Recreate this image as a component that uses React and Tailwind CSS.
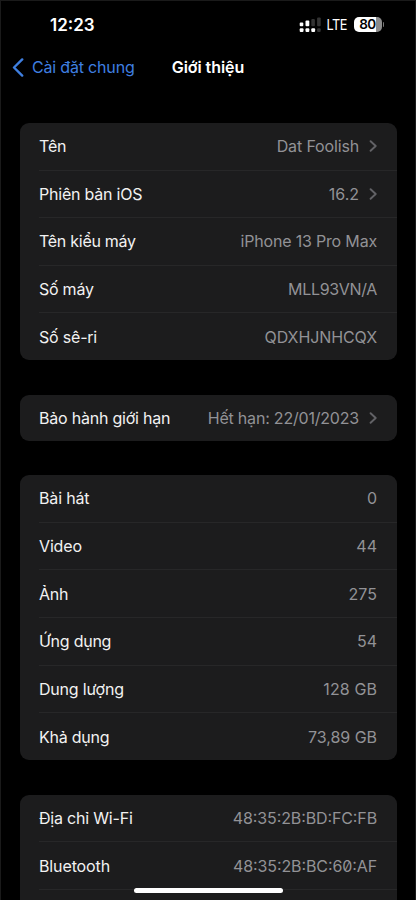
import React from "react";

const groups = [
  {
    id: "device",
    rows: [
      { label: "Tên", value: "Dat Foolish", link: true, labelClass: "tracking-[-0.2px]", valueClass: "tracking-[-0.15px]" },
      { label: "Phiên bản iOS", value: "16.2", link: true, labelClass: "tracking-[-0.22px]" },
      { label: "Tên kiểu máy", value: "iPhone 13 Pro Max", labelClass: "tracking-[-0.27px]", valueClass: "tracking-[-0.18px]" },
      { label: "Số máy", value: "MLL93VN/A", labelClass: "tracking-[-0.25px]", valueClass: "tracking-[-0.33px]" },
      { label: "Số sê-ri", value: "QDXHJNHCQX", labelClass: "tracking-[-0.2px]", valueClass: "tracking-[-0.1px]" },
    ],
  },
  {
    id: "warranty",
    rows: [
      { label: "Bảo hành giới hạn", value: "Hết hạn: 22/01/2023", link: true, labelClass: "tracking-[-0.22px]", valueClass: "tracking-[-0.2px]" },
    ],
  },
  {
    id: "storage",
    rows: [
      { label: "Bài hát", value: "0", labelClass: "tracking-[-0.15px]" },
      { label: "Video", value: "44", labelClass: "tracking-[-0.15px]" },
      { label: "Ảnh", value: "275", labelClass: "tracking-[-0.2px]" },
      { label: "Ứng dụng", value: "54", labelClass: "tracking-[-0.25px]" },
      { label: "Dung lượng", value: "128 GB", labelClass: "tracking-[-0.2px]", valueClass: "tracking-[0.1px]" },
      { label: "Khả dụng", value: "73,89 GB", labelClass: "tracking-[-0.25px]", valueClass: "tracking-[-0.05px]" },
    ],
  },
  {
    id: "network",
    rows: [
      { label: "Địa chỉ Wi-Fi", value: "48:35:2B:BD:FC:FB", labelClass: "tracking-[-0.2px]", valueClass: "tracking-[-0.12px] [font-feature-settings:'zero','case']" },
      { label: "Bluetooth", value: "48:35:2B:BC:60:AF", labelClass: "tracking-[-0.12px]", valueClass: "tracking-[-0.1px] [font-feature-settings:'zero','case']" },
      { label: "", value: "" },
    ],
  },
];

function Signal() {
  return (
    <svg width="22" height="16" viewBox="0 0 22 16" fill="#fff">
      <rect x="0.7" y="5.4" width="3.6" height="3.8" rx="1" />
      <rect x="6.5" y="3.4" width="3.8" height="5.8" rx="1" />
      <rect x="12.3" y="2" width="3.6" height="7.2" rx="1" fill="#333" />
      <rect x="18.1" y="0.4" width="3.6" height="8.8" rx="1" fill="#333" />
      <rect x="0.7" y="11.2" width="3.8" height="3.8" rx="1" />
      <rect x="6.5" y="11.2" width="3.8" height="3.8" rx="1" />
      <rect x="12.3" y="11.2" width="3.8" height="3.8" rx="1" />
      <rect x="18.1" y="11.2" width="3.6" height="3.8" rx="1" fill="#333" />
    </svg>
  );
}

function Battery() {
  return (
    <div className="flex items-center">
      <div className="flex h-[15px] w-[28px] items-center justify-center rounded-[5px] bg-[linear-gradient(to_right,#fff_80%,#8c8c8c_80%)] text-[13.5px] leading-none font-semibold tracking-[-0.5px] text-black">
        80
      </div>
      <div className="ml-px h-[5px] w-[1.5px] rounded-r-full bg-[#777]" />
    </div>
  );
}

function Row({ label, value, link, last, labelClass = "", valueClass = "" }) {
  return (
    <div className={last ? "flex h-[47px] items-center justify-between pr-[19.5px]" : "flex h-[47.6px] items-center justify-between border-b border-[#272728] pr-[19.5px]"}>
      <span className={`text-[#f2f2f2] ${labelClass}`}>{label}</span>
      <span className="flex items-center text-[#929296]">
        <span className={valueClass}>{value}</span>
        {link && (
          <svg className="ml-[10px]" width="8" height="12" viewBox="0 0 8 12" fill="none" stroke="#626266" strokeWidth="1.9" strokeLinecap="round" strokeLinejoin="round">
            <path d="M1.6 1.2 6.7 6 1.6 10.8" />
          </svg>
        )}
      </span>
    </div>
  );
}

export default function App() {
  return (
    <div className="relative h-[900px] w-[416px] overflow-hidden border border-b-0 border-[#1a1a1a] bg-black font-['Inter',sans-serif] text-[16px] leading-5 text-white">
      {/* status bar */}
      <div className="flex h-[47px] items-center justify-between pr-[31px] pl-[49px]">
        <span className="text-[17px] font-semibold">12:23</span>
        <div className="flex items-center">
          <Signal />
          <span className="mr-[5px] ml-[4px] w-[24px] scale-x-[0.88] text-[14.5px] tracking-[-0.5px]">LTE</span>
          <Battery />
        </div>
      </div>

      {/* nav bar */}
      <div className="grid h-[38px] grid-cols-[1fr_auto_1fr] items-center">
        <div className="flex items-center pl-[11px] text-[#3f7fe0]">
          <svg width="12" height="19" viewBox="0 0 12 19" fill="none" stroke="currentColor" strokeWidth="2.4" strokeLinecap="round" strokeLinejoin="round">
            <path d="M10.2 1.4 2 9.5l8.2 8.1" />
          </svg>
          <span className="ml-[8px] tracking-[-0.18px] whitespace-nowrap">Cài đặt chung</span>
        </div>
        <h1 className="font-semibold tracking-[-0.05px]">Giới thiệu</h1>
      </div>

      <div className="mt-[37px] flex flex-col gap-[34.6px] pr-[18.5px] pl-[19px]">
        {groups.map((group) => (
          <section
            key={group.id}
            className={
              group.rows.length === 1
                ? "flex h-[45.6px] shrink-0 flex-col justify-center rounded-[9px] bg-[#1c1c1d] pl-[19px]"
                : "flex shrink-0 flex-col rounded-[9px] bg-[#1c1c1d] pl-[19px]"
            }
          >
            {group.rows.map((row, i) => (
              <Row key={i} {...row} last={i === group.rows.length - 1} />
            ))}
          </section>
        ))}
      </div>

      {/* home indicator */}
      <div className="absolute bottom-[7.5px] left-[133px] h-[5px] w-[149px] rounded-full bg-white" />
    </div>
  );
}
